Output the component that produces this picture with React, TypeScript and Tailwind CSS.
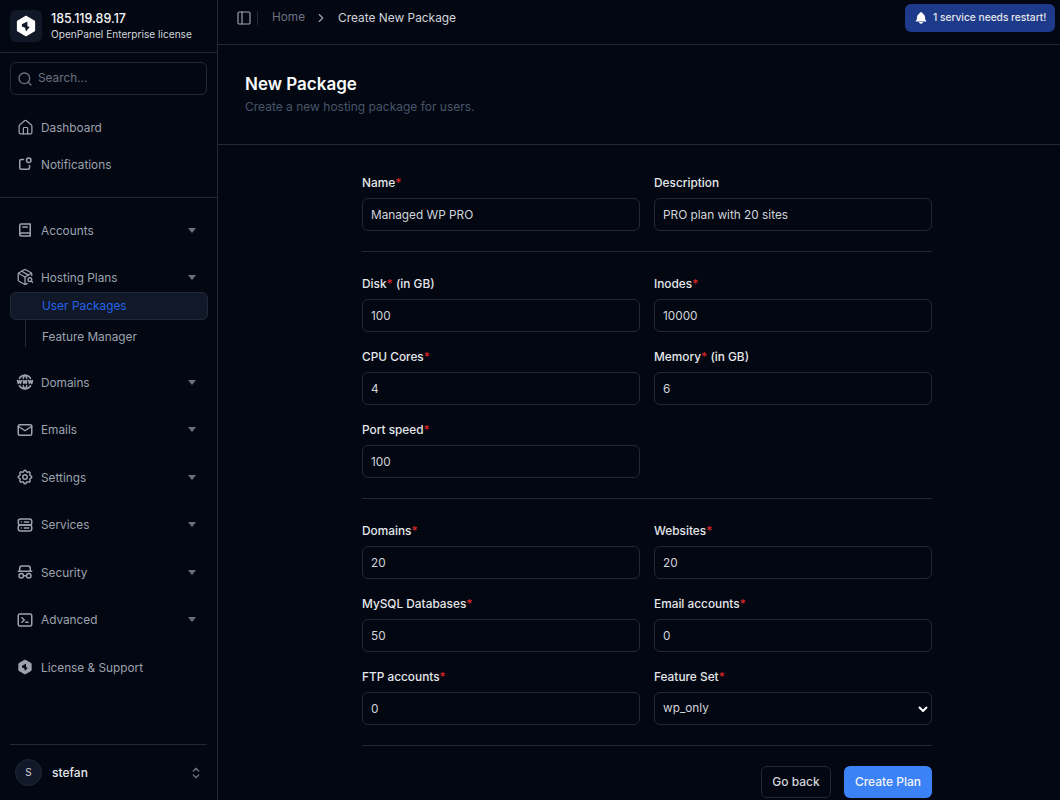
import { ChevronRight, House, PackageSearch, PanelLeft, Search } from "lucide-react";
import {
  TbBellFilled,
  TbBook2,
  TbMail,
  TbNotification,
  TbSelector,
  TbServer2,
  TbSettings,
  TbSpy,
  TbTerminal2,
  TbWorldWww,
} from "react-icons/tb";
import type { ReactNode } from "react";

function Logo({ className, cut }: { className: string; cut: string }) {
  return (
    <svg viewBox="0 0 24 24" className={className}>
      <path
        d="M12 1.5 21.2 6.8V17.2L12 22.5 2.8 17.2V6.8Z"
        fill="currentColor"
        stroke="currentColor"
        strokeWidth="1.5"
        strokeLinejoin="round"
      />
      <path d="M7.5 10 13.5 7.2V12.2L16 13.2 12 18 11 13.8 7.5 12.6Z" fill={cut} />
    </svg>
  );
}

function Caret() {
  return (
    <svg viewBox="0 0 8 5" className="h-[5px] w-[8px] text-gray-500">
      <path d="M0 0H8L4 5Z" fill="currentColor" />
    </svg>
  );
}

function NavItem({ icon, label, caret }: { icon: ReactNode; label: string; caret?: boolean }) {
  return (
    <div className="flex h-[20px] items-center pl-[16px] pr-[21px] text-[#9ca3af]">
      <span className="flex w-[18px] justify-center">{icon}</span>
      <span className="ml-[7px] flex-1 pt-[1px] text-[11.8px] leading-5">{label}</span>
      {caret && <Caret />}
    </div>
  );
}

function Label({ text, req = true, extra }: { text: string; req?: boolean; extra?: string }) {
  return (
    <label className="block h-[20px] text-[11.85px] font-medium leading-[22px] text-[#e5e7eb]">
      {text}
      {req && <span className="text-[#dc2626]">*</span>}
      {extra && <span> {extra}</span>}
    </label>
  );
}

function Field({ label, value, req, extra }: { label: string; value: string; req?: boolean; extra?: string }) {
  return (
    <div>
      <Label text={label} req={req} extra={extra} />
      <input
        readOnly
        value={value}
        className="mt-[6px] block h-[33px] w-full rounded-md border border-[#1f2937] bg-[#030712] px-[8px] text-[11.8px] text-[#d1d5db] outline-none"
      />
    </div>
  );
}

export default function App() {
  return (
    <div className="flex h-[800px] w-[1060px] overflow-hidden bg-[#030712] font-['Inter',sans-serif]">
      {/* sidebar */}
      <aside className="flex w-[218px] shrink-0 flex-col border-r border-[#1f2937]">
        <div className="flex h-[53px] shrink-0 items-center gap-[9px] border-b border-[#1f2937] px-[10px]">
          <div className="flex h-[32px] w-[32px] items-center justify-center rounded-md bg-[#111827] text-white">
            <Logo className="h-[22px] w-[22px]" cut="#111827" />
          </div>
          <div className="min-w-0">
            <div className="text-[12.5px] font-medium leading-[17px] text-[#f3f4f6]">185.119.89.17</div>
            <div className="whitespace-nowrap text-[10.15px] leading-[15px] text-[#d1d5db]">OpenPanel Enterprise license</div>
          </div>
        </div>

        <div className="px-[10px] pt-[9px]">
          <div className="flex h-[33px] items-center rounded-md border border-[#1f2937] pl-[6px] text-[#6b7280]">
            <Search className="h-[16px] w-[16px]" />
            <span className="ml-[5px] pt-[1px] text-[11.8px]">Search...</span>
          </div>
        </div>

        <div className="flex h-[103px] shrink-0 flex-col gap-[17px] border-b border-[#1f2937] pt-[22px]">
          <NavItem icon={<House className="h-[17px] w-[17px]" strokeWidth={1.75} />} label="Dashboard" />
          <NavItem icon={<TbNotification className="h-[18px] w-[18px]" />} label="Notifications" />
        </div>

        <div className="flex flex-1 flex-col pt-[22px]">
          <NavItem icon={<TbBook2 className="h-[18px] w-[18px]" />} label="Accounts" caret />
          <div className="mt-[27px]">
            <NavItem icon={<PackageSearch className="h-[18px] w-[18px]" strokeWidth={1.75} />} label="Hosting Plans" caret />
          </div>
          <div className="ml-[10px] mr-[9px] mt-[5px] flex h-[28px] items-center rounded-md border border-[#1f2937] bg-[#111827] pl-[31px] text-[11.9px] text-[#2563eb]">
            User Packages
          </div>
          <div className="ml-[25px] h-[27px] border-l border-[#1f2937] pl-[16px] pt-[7px] text-[11.8px] leading-5 text-[#9ca3af]">
            Feature Manager
          </div>
          <div className="mt-[25px] flex flex-col gap-[27.5px]">
            <NavItem icon={<TbWorldWww className="h-[18px] w-[18px]" />} label="Domains" caret />
            <NavItem icon={<TbMail className="h-[18px] w-[18px]" />} label="Emails" caret />
            <NavItem icon={<TbSettings className="h-[18px] w-[18px]" />} label="Settings" caret />
            <NavItem icon={<TbServer2 className="h-[18px] w-[18px]" />} label="Services" caret />
            <NavItem icon={<TbSpy className="h-[18px] w-[18px]" />} label="Security" caret />
            <NavItem icon={<TbTerminal2 className="h-[18px] w-[18px]" />} label="Advanced" caret />
            <NavItem icon={<Logo className="h-[16px] w-[16px]" cut="#030712" />} label="License & Support" />
          </div>
        </div>

        <div className="mx-[10px] flex h-[56px] shrink-0 items-center border-t border-[#1f2937] pl-[5px] pr-[3px]">
          <div className="flex h-[27px] w-[27px] items-center justify-center rounded-full border border-[#1f2937] bg-[#111827] text-[10px] text-[#d1d5db]">
            S
          </div>
          <span className="ml-[10px] flex-1 text-[12px] font-medium text-[#e5e7eb]">stefan</span>
          <TbSelector className="h-[16px] w-[16px] text-[#6b7280]" />
        </div>
      </aside>

      {/* main */}
      <main className="min-w-0 flex-1">
        <header className="flex h-[45px] items-center border-b border-[#1f2937] pb-[9px] pl-[18px] pr-[5px]">
          <PanelLeft className="h-[16px] w-[16px] text-[#9ca3af]" strokeWidth={1.75} />
          <span className="ml-[5px] h-[14px] border-l border-[#1f2937]" />
          <span className="ml-[14px] pt-[1px] text-[11.8px] text-[#6b7280]">Home</span>
          <ChevronRight className="ml-[9px] h-[14px] w-[14px] text-[#9ca3af]" />
          <span className="ml-[10px] text-[11.9px] text-[#d1d5db]">Create New Package</span>
          <div className="ml-auto flex h-[28px] w-[150px] items-center gap-[5px] rounded-md bg-[#1e3a8a] pl-[9px] text-[10.2px] font-medium text-[#e5e7eb]">
            <TbBellFilled className="h-[14px] w-[14px] text-white" />
            1 service needs restart!
          </div>
        </header>

        <div className="h-[100px] border-b border-[#1f2937] pl-[27px] pt-[28px]">
          <h1 className="text-[17px] font-semibold leading-[23px] text-[#f9fafb]">New Package</h1>
          <p className="text-[12px] leading-[22px] text-[#475569]">Create a new hosting package for users.</p>
        </div>

        <form className="ml-[144px] w-[570px] pt-[27px]">
          <div className="grid grid-cols-2 gap-x-[14px]">
            <Field label="Name" value="Managed WP PRO" />
            <Field label="Description" value="PRO plan with 20 sites" req={false} />
          </div>
          <hr className="mt-[20px] border-[#1f2937]" />
          <div className="mt-[21px] grid grid-cols-2 gap-x-[14px] gap-y-[14px]">
            <Field label="Disk" value="100" extra="(in GB)" />
            <Field label="Inodes" value="10000" />
            <Field label="CPU Cores" value="4" />
            <Field label="Memory" value="6" extra="(in GB)" />
            <Field label="Port speed" value="100" />
          </div>
          <hr className="mt-[20px] border-[#1f2937]" />
          <div className="mt-[21px] grid grid-cols-2 gap-x-[14px] gap-y-[14px]">
            <Field label="Domains" value="20" />
            <Field label="Websites" value="20" />
            <Field label="MySQL Databases" value="50" />
            <Field label="Email accounts" value="0" />
            <Field label="FTP accounts" value="0" />
            <div>
              <Label text="Feature Set" />
              <div className="relative mt-[6px] flex h-[33px] items-center rounded-md border border-[#1f2937] px-[8px] text-[11.8px] text-[#d1d5db]">
                wp_only
                <svg viewBox="0 0 10 6" className="absolute right-[3px] h-[6px] w-[10px] text-white">
                  <path d="M1 1 5 5 9 1" fill="none" stroke="currentColor" strokeWidth="2" />
                </svg>
              </div>
            </div>
          </div>
          <hr className="mt-[20px] border-[#1f2937]" />
          <div className="mt-[20px] flex justify-end gap-[13px]">
            <button type="button" className="h-[32px] w-[70px] rounded-md border border-[#1f2937] text-[12px] font-medium text-[#d1d5db]">
              Go back
            </button>
            <button type="button" className="h-[32px] w-[88px] rounded-md bg-[#3b82f6] text-[12px] font-medium text-[#f3f4f6]">
              Create Plan
            </button>
          </div>
        </form>
      </main>
    </div>
  );
}
